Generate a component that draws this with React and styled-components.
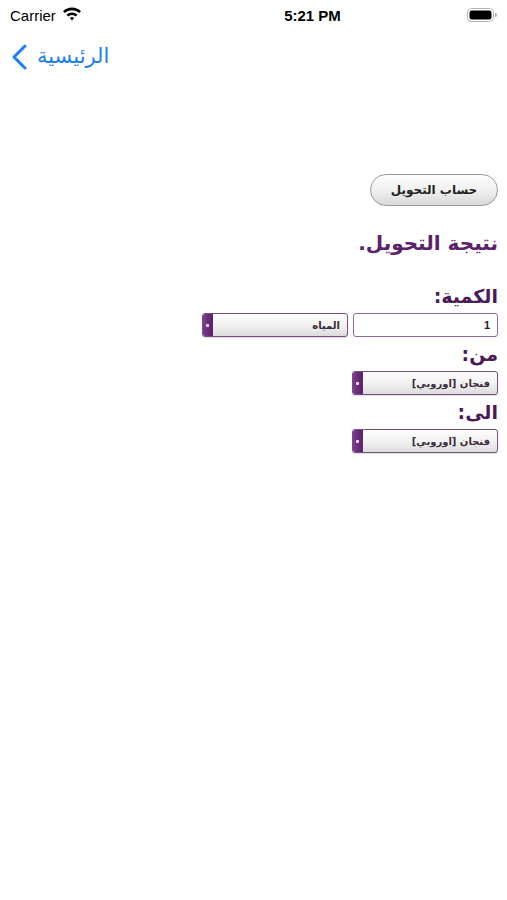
import styled, { createGlobalStyle } from "styled-components"

const GlobalStyle = createGlobalStyle`
    html, body {
        margin: 0;
        padding: 0;
        background: #ffffff;
    }
    body {
        font-family: "Liberation Sans", "DejaVu Sans", sans-serif;
    }
`

const ARABIC = `"DejaVu Sans", "Noto Sans", sans-serif`
const PURPLE = "#5b2169"

const Wifi = () => (
    <svg width="20" height="15" viewBox="0 0 20 15">
        <path d="M1 5.2 A13 13 0 0 1 19 5.2 L17.2 7.1 A10.4 10.4 0 0 0 2.8 7.1 Z" fill="#000" />
        <path d="M4.4 8.7 A8 8 0 0 1 15.6 8.7 L13.8 10.6 A5.4 5.4 0 0 0 6.2 10.6 Z" fill="#000" />
        <path d="M7.8 12.1 A3.2 3.2 0 0 1 12.2 12.1 L10 14.4 Z" fill="#000" />
    </svg>
)

const Battery = () => (
    <svg width="30" height="14" viewBox="0 0 30 14">
        <rect x="0.5" y="0.5" width="26" height="13" rx="4" fill="none" stroke="#b5b5b5" />
        <rect x="2.5" y="2.5" width="22" height="9" rx="2.2" fill="#000" />
        <path d="M28 4.8 a2 2.2 0 0 1 0 4.4 Z" fill="#b5b5b5" />
    </svg>
)

const Chevron = () => (
    <svg width="18" height="26" viewBox="0 0 18 26">
        <polyline points="14,2 3,13 14,24" fill="none" stroke="#1a7ff0" strokeWidth="3" strokeLinecap="round" strokeLinejoin="round" />
    </svg>
)

const Picker = ({ value }) => (
    <PickerBox>
        <PickerHandle>
            <Dot />
        </PickerHandle>
        <PickerText>{value}</PickerText>
    </PickerBox>
)

const App = () => {
    return (
        <Page>
            <GlobalStyle />
            <StatusBar>
                <Carrier>
                    Carrier
                    <Wifi />
                </Carrier>
                <Clock>5:21 PM</Clock>
                <Battery />
            </StatusBar>

            <NavBar>
                <BackLink>
                    <Chevron />
                    <span>الرئيسية</span>
                </BackLink>
            </NavBar>

            <Form>
                <ConvertButton>حساب التحويل</ConvertButton>
                <Result>نتيجة التحويل.</Result>

                <Label>الكمية:</Label>
                <Row>
                    <AmountInput>1</AmountInput>
                    <Picker value="المياه" />
                </Row>

                <Label>من:</Label>
                <Row>
                    <Picker value="فنجان [اوروبي]" />
                </Row>

                <Label>الى:</Label>
                <Row>
                    <Picker value="فنجان [اوروبي]" />
                </Row>
            </Form>
        </Page>
    )
}

const Page = styled.div`
    width: 507px;
    min-height: 900px;
    background: #fff;
`

const StatusBar = styled.div`
    height: 30px;
    padding: 0 10px;
    display: flex;
    align-items: center;
    justify-content: space-between;
    font-family: "Liberation Sans", Arial, sans-serif;
    font-size: 15px;
    color: #000;
`

const Carrier = styled.div`
    width: 120px;
    display: flex;
    align-items: center;
    gap: 6px;

    svg {
        position: relative;
        top: -2px;
    }
`

const Clock = styled.div`
    font-weight: 700;
    font-size: 15px;
    position: relative;
    left: 14px;
`

const NavBar = styled.div`
    height: 54px;
    display: flex;
    align-items: center;
    padding-left: 11px;
`

const BackLink = styled.div`
    display: flex;
    align-items: center;
    gap: 8px;
    color: #1a7ff0;
    font-family: ${ARABIC};
    font-size: 21px;

    span {
        position: relative;
        top: -1px;
    }
`

const Form = styled.div`
    direction: rtl;
    padding: 90px 9px 0 0;
    display: flex;
    flex-direction: column;
    align-items: flex-start;
`

const ConvertButton = styled.div`
    width: 128px;
    height: 32px;
    box-sizing: border-box;
    border: 1px solid #999;
    border-radius: 16px;
    background: linear-gradient(#fefefe 0%, #f0f0f0 50%, #d9d9d9 100%);
    box-shadow: inset 0 1px 0 #fff;
    display: flex;
    align-items: center;
    justify-content: center;
    font-family: ${ARABIC};
    font-size: 12px;
    font-weight: 700;
    color: #222;
`

const Result = styled.div`
    margin-top: 22px;
    margin-bottom: 21px;
    height: 30px;
    line-height: 30px;
    font-family: ${ARABIC};
    font-size: 20px;
    font-weight: 700;
    color: ${PURPLE};
`

const Label = styled.div`
    height: 34px;
    line-height: 34px;
    font-family: ${ARABIC};
    font-size: 19px;
    font-weight: 700;
    color: #4a1a57;
`

const Row = styled.div`
    display: flex;
    gap: 5px;
`

const AmountInput = styled.div`
    width: 145px;
    height: 24px;
    box-sizing: border-box;
    border: 1.5px solid #8f6a9a;
    border-radius: 3px;
    background: #fff;
    padding: 0 7px;
    display: flex;
    align-items: center;
    font-family: "Liberation Sans", Arial, sans-serif;
    font-size: 11px;
    font-weight: 700;
    color: #222;
`

const PickerBox = styled.div`
    direction: ltr;
    width: 146px;
    height: 24px;
    box-sizing: border-box;
    border: 1.5px solid #7b4d88;
    border-radius: 3px;
    display: flex;
    overflow: hidden;
    background: linear-gradient(#fdfdfd 0%, #f2f2f2 50%, #dcdcdc 100%);
    box-shadow: 0 1px 1px rgba(0, 0, 0, 0.15);
`

const PickerHandle = styled.div`
    width: 9px;
    flex-shrink: 0;
    background: linear-gradient(90deg, #7a3f8c, #5c2169);
    display: flex;
    align-items: center;
    justify-content: center;
    border-right: 1px solid #5a2a66;
`

const Dot = styled.div`
    width: 3px;
    height: 3px;
    background: #f1e6f4;
    border-radius: 1px;
`

const PickerText = styled.div`
    flex: 1;
    direction: rtl;
    padding: 0 7px;
    display: flex;
    align-items: center;
    font-family: ${ARABIC};
    font-size: 10px;
    font-weight: 700;
    color: #3a2a3a;
`

export default App
